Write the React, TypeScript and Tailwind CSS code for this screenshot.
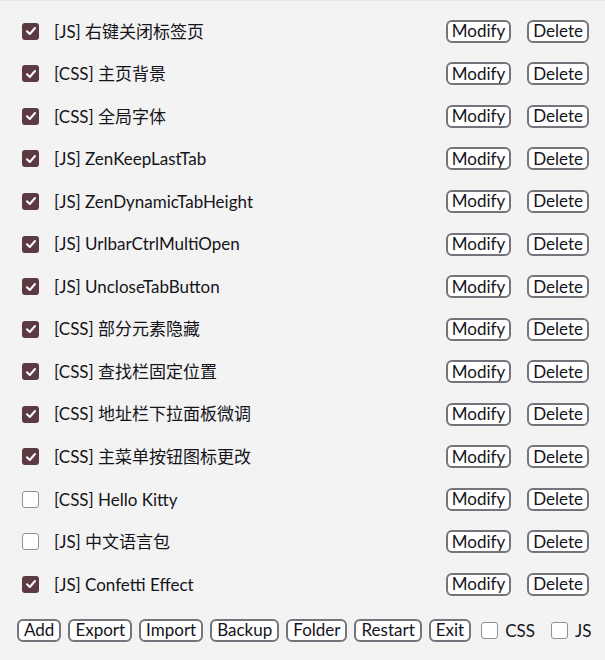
import React from "react";

const items: { label: string; checked: boolean }[] = [
  { label: "[JS] 右键关闭标签页", checked: true },
  { label: "[CSS] 主页背景", checked: true },
  { label: "[CSS] 全局字体", checked: true },
  { label: "[JS] ZenKeepLastTab", checked: true },
  { label: "[JS] ZenDynamicTabHeight", checked: true },
  { label: "[JS] UrlbarCtrlMultiOpen", checked: true },
  { label: "[JS] UncloseTabButton", checked: true },
  { label: "[CSS] 部分元素隐藏", checked: true },
  { label: "[CSS] 查找栏固定位置", checked: true },
  { label: "[CSS] 地址栏下拉面板微调", checked: true },
  { label: "[CSS] 主菜单按钮图标更改", checked: true },
  { label: "[CSS] Hello Kitty", checked: false },
  { label: "[JS] 中文语言包", checked: false },
  { label: "[JS] Confetti Effect", checked: true },
];

function Box({ checked }: { checked: boolean }) {
  return checked ? (
    <span className="flex h-[17px] w-[17px] items-center justify-center rounded-[3px] bg-[#5b3a41]">
      <svg width="12" height="12" viewBox="0 0 12 12" fill="none">
        <path d="M2 6.3 L4.8 9 L10 3" stroke="white" strokeWidth="2" strokeLinecap="round" strokeLinejoin="round" />
      </svg>
    </span>
  ) : (
    <span className="block h-[17px] w-[17px] rounded-[3px] border border-[#8f8f9d] bg-white" />
  );
}

function Btn({ children, wide }: { children: React.ReactNode; wide?: boolean }) {
  return (
    <button
      className={
        wide
          ? "h-[23px] rounded-[6px] border-2 border-[#75737b] bg-white px-[5px] text-[17px] leading-[18px] text-[#15141a]"
          : "h-[23px] rounded-[6px] border-2 border-[#75737b] bg-white px-[4px] text-[17px] leading-[18px] text-[#15141a]"
      }
    >
      {children}
    </button>
  );
}

export default function App() {
  return (
    <div
      className="h-[660px] w-[605px] border-t border-[#e6e6e6] bg-[#f3f3f3] text-[#15141a]"
      style={{ fontFamily: "Lato, 'Noto Sans CJK SC', sans-serif" }}
    >
      <div className="pt-[9px]">
        {items.map((it) => (
          <div key={it.label} className="flex h-[42.55px] items-center pl-[22px] pr-[16px]">
            <Box checked={it.checked} />
            <span className="ml-[15px] flex-1 text-[17px]">{it.label}</span>
            <div className="flex gap-[16px]">
              <Btn>Modify</Btn>
              <Btn>Delete</Btn>
            </div>
          </div>
        ))}
      </div>
      <div className="mt-[12px] flex items-center pl-[17px] text-[17px]">
        <div className="flex gap-[7px]">
          <Btn wide>Add</Btn>
          <Btn wide>Export</Btn>
          <Btn wide>Import</Btn>
          <Btn wide>Backup</Btn>
          <Btn wide>Folder</Btn>
          <Btn wide>Restart</Btn>
          <Btn wide>Exit</Btn>
        </div>
        <label className="ml-[10px] flex items-center gap-[7px]">
          <Box checked={false} />
          <span>CSS</span>
        </label>
        <label className="ml-[16px] flex items-center gap-[7px]">
          <Box checked={false} />
          <span>JS</span>
        </label>
      </div>
    </div>
  );
}
